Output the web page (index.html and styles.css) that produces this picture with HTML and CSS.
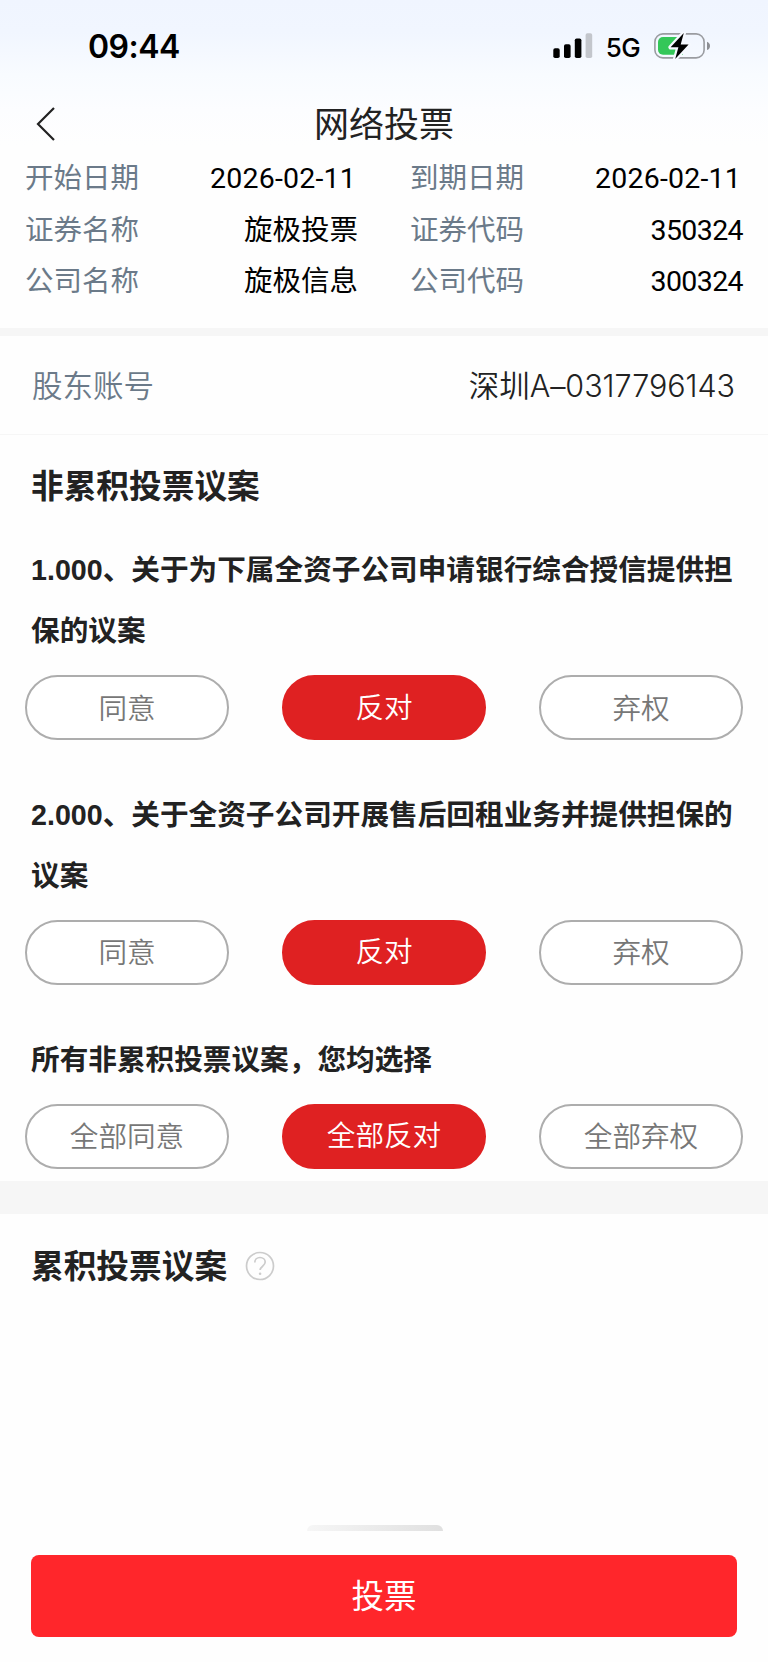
FILE: index.html
```
<!DOCTYPE html>
<html lang="zh-CN">
<head>
    <meta charset="UTF-8">
    <meta name="viewport" content="width=device-width, initial-scale=1.0">
    <title>网络投票</title>
    <link rel="stylesheet" href="styles.css">
</head>
<body>
    <div class="page">
        <div class="top">
            <div class="status">
                <span class="time">09:44</span>
                <div class="status-right">
                    <svg class="signal" width="40" height="26" viewBox="0 0 40 26">
                        <rect x="0.3" y="15.3" width="6.4" height="9.7" rx="1.8"/>
                        <rect x="11" y="11.2" width="6.6" height="13.8" rx="1.8"/>
                        <rect x="21.8" y="5.4" width="6.6" height="19.6" rx="1.8"/>
                        <rect x="32.6" y="0.2" width="6.6" height="24.8" rx="1.8" fill="#c3c6cc"/>
                    </svg>
                    <span class="net">5G</span>
                    <svg class="battery" width="57" height="28" viewBox="0 0 57 28">
                        <rect x="0.9" y="1.9" width="49.2" height="24" rx="8" fill="none" stroke="#9a9ca1" stroke-width="1.6"/>
                        <path d="M53 9.8c2 .7 3 2.3 3 4.1s-1 3.4-3 4.1z" fill="#8c8e93"/>
                        <path d="M9 5h20v17.8H9a5 5 0 0 1-5-5V10a5 5 0 0 1 5-5z" fill="#34c759"/>
                        <path d="M29.8 .9 16.6 15.3h7.8l-3.2 11.6L34.6 12.4h-7.9z" fill="#000" stroke="#f6f9ff" stroke-width="4.4" stroke-linejoin="round" paint-order="stroke"/>
                    </svg>
                </div>
            </div>
            <div class="nav">
                <svg class="back" width="20" height="34" viewBox="0 0 20 34">
                    <path d="M18 1 2 17l16 16" fill="none" stroke="#222" stroke-width="2.2"/>
                </svg>
                <h1>网络投票</h1>
            </div>
        </div>

        <div class="info">
            <div class="item"><span class="label">开始日期</span><span class="value date">2026-02-11</span></div>
            <div class="item"><span class="label">到期日期</span><span class="value date">2026-02-11</span></div>
            <div class="item"><span class="label">证券名称</span><span class="value">旋极投票</span></div>
            <div class="item"><span class="label">证券代码</span><span class="value code">350324</span></div>
            <div class="item"><span class="label">公司名称</span><span class="value">旋极信息</span></div>
            <div class="item"><span class="label">公司代码</span><span class="value code">300324</span></div>
        </div>

        <div class="account">
            <span class="label">股东账号</span>
            <span class="account-no">深圳<span class="num">A–0317796143</span></span>
        </div>

        <div class="votes">
            <h2>非累积投票议案</h2>
            <div class="proposal">
                <p>1.000、关于为下属全资子公司申请银行综合授信提供担保的议案</p>
                <div class="options">
                    <button>同意</button>
                    <button class="on">反对</button>
                    <button>弃权</button>
                </div>
            </div>
            <div class="proposal">
                <p>2.000、关于全资子公司开展售后回租业务并提供担保的议案</p>
                <div class="options">
                    <button>同意</button>
                    <button class="on">反对</button>
                    <button>弃权</button>
                </div>
            </div>
            <div class="proposal">
                <p>所有非累积投票议案，您均选择</p>
                <div class="options">
                    <button>全部同意</button>
                    <button class="on">全部反对</button>
                    <button>全部弃权</button>
                </div>
            </div>
        </div>

        <div class="cumulative">
            <h2>累积投票议案</h2>
            <svg class="help" width="30" height="30" viewBox="0 0 30 30" fill="none" stroke="#ccc">
                <circle cx="15" cy="15" r="13.5" stroke-width="1.7"/>
                <path d="M9.8 11.5c0-3 2.2-5 5.2-5s5.2 2 5.2 4.6c0 4-5.1 4.2-5.1 8" stroke-width="1.7"/>
                <circle cx="15.1" cy="22.8" r="1.3" fill="#ccc" stroke="none"/>
            </svg>
        </div>

        <div class="footer">
            <div class="handle"></div>
            <button class="submit">投票</button>
        </div>
    </div>
</body>
</html>
```
FILE: styles.css
```
* {
    box-sizing: border-box;
}
body {
    margin: 0;
    background: #fefefe;
    color: #222;
    font-family: "Liberation Sans", "Noto Sans CJK SC", sans-serif;
}
h1, h2, p {
    margin: 0;
}
button {
    padding: 0;
    font-family: inherit;
}
.page {
    display: flex;
    flex-direction: column;
    width: 768px;
    height: 1662px;
}

/* status bar + title */
.top {
    height: 153px;
    background: linear-gradient(#f0f5ff 0, #f1f6ff 32px, #f8fbff 75px, #fcfdff 110px, #fefefe 145px);
}
.status {
    display: flex;
    justify-content: space-between;
    align-items: center;
    height: 92px;
    padding: 0 57px 0 88px;
    color: #000;
}
.time {
    padding-top: 2px;
    font: 600 32px/40px Inter, sans-serif;
    letter-spacing: -0.5px;
}
.status-right {
    display: flex;
    align-items: center;
}
.net {
    margin: 3px 14px 0 13px;
    font: 500 26px/30px Inter, sans-serif;
    letter-spacing: -0.6px;
}
.nav {
    display: grid;
    grid-template-columns: 60px 1fr 60px;
    align-items: center;
    height: 64px;
}
.back {
    margin-left: 36px;
}
h1 {
    padding-top: 2px;
    font-size: 35px;
    font-weight: 400;
    line-height: 50px;
    text-align: center;
}

/* basic info */
.info {
    display: grid;
    grid-template-columns: 333px 333px;
    grid-auto-rows: 51.5px;
    column-gap: 52px;
    height: 175px;
    padding-left: 25px;
}
.item {
    display: flex;
    justify-content: space-between;
    align-items: center;
    font-size: 28.5px;
    line-height: 41px;
}
.label {
    color: #6b7a89;
}
.value {
    color: #000;
}
.date, .code {
    font-family: Roboto, sans-serif;
    letter-spacing: -0.6px;
}
.date {
    padding-right: 2px;
    letter-spacing: 0.2px;
}

.account {
    display: flex;
    justify-content: space-between;
    align-items: center;
    height: 107px;
    padding: 2px 33px 0 32px;
    border-top: 8px solid #f6f6f6;
    border-bottom: 1px solid #f6f6f6;
    font-size: 30.5px;
    font-weight: 350;
    line-height: 44px;
}
.num {
    font-family: Inter, sans-serif;
    letter-spacing: -0.05px;
}

/* proposals */
h2 {
    font-size: 32.7px;
    font-weight: 700;
    line-height: 50px;
}
.votes {
    height: 746px;
    padding: 27px 25px 0 25px;
}
.votes h2 {
    padding-left: 6px;
    margin-bottom: 28px;
}
.proposal {
    margin-bottom: 44.8px;
}
.proposal p {
    padding: 0 0 13px 6px;
    font-size: 28.65px;
    font-weight: 700;
    line-height: 61px;
}
.options {
    display: flex;
    justify-content: space-between;
}
.options button {
    width: 204px;
    height: 65px;
    padding-bottom: 3px;
    border: 2px solid #adadad;
    border-radius: 33px;
    background: #fff;
    color: #777;
    font-size: 28.6px;
    font-weight: 350;
}
.options .on {
    padding-bottom: 5px;
    border-color: #df2122;
    background: #df2122;
    color: #fff;
}

.cumulative {
    display: flex;
    align-items: center;
    height: 137px;
    padding-left: 31px;
    border-top: 33px solid #f6f6f6;
}
.cumulative h2 {
    padding-top: 2px;
}
.help {
    margin-left: 18px;
}

.footer {
    margin-top: auto;
    padding: 0 31px 25px;
}
.handle {
    width: 136px;
    height: 6px;
    margin: 0 0 24px 276px;
    border-radius: 6px 6px 0 0;
    background: linear-gradient(90deg, #f6f6f6, #e0e0e0);
}
.submit {
    display: block;
    width: 100%;
    height: 82px;
    padding-bottom: 5px;
    border: 0;
    border-radius: 8px;
    background: #ff262b;
    color: #fff;
    font-size: 32.5px;
}
```
